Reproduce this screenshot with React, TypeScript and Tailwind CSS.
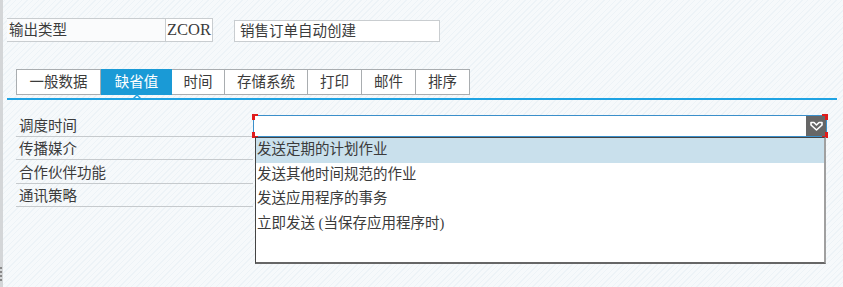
const tabs = ["一般数据", "缺省值", "时间", "存储系统", "打印", "邮件", "排序"];
const tabWidths = ["w-[85px]", "w-[71px]", "w-[53px]", "w-[83px]", "w-[54px]", "w-[54px]", "w-[54px]"];

const rows = ["调度时间", "传播媒介", "合作伙伴功能", "通讯策略"];

const options = [
  "发送定期的计划作业",
  "发送其他时间规范的作业",
  "发送应用程序的事务",
  "立即发送 (当保存应用程序时)",
];

function Corner({ className }: { className: string }) {
  return <span className={`absolute h-[6px] w-[6px] border-solid border-[#e01b1b] ${className}`} />;
}

export default function App() {
  return (
    <div
      className="flex h-[287px] w-[843px] overflow-hidden bg-[repeating-linear-gradient(135deg,#f6f9fb_0px,#f6f9fb_3px,#edf3f7_3px,#edf3f7_4px)] text-[14.5px] leading-none text-[#3b3b3b]"
      style={{ fontFamily: '"Liberation Serif", "Noto Sans CJK SC", serif' }}
    >
      {/* left edge strip */}
      <div className="flex w-[3px] flex-col justify-end bg-[#d4d6d8]">
        <div className="mb-[6px] h-[14px] border-l-[2px] border-dotted border-[#888]" />
      </div>

      <div className="flex flex-1 flex-col pl-[4px]">
        {/* header */}
        <div className="mt-[18px] flex items-start">
          <div className="flex h-[24px] w-[158px] items-center border-y border-[#c9cdd0] bg-[#fafbfc] pl-[2px] pt-[1px]">
            输出类型
          </div>
          <div className="flex h-[24px] w-[48px] items-center justify-center border border-[#c9cdd0] bg-white pt-[1px] text-[16.5px]">
            ZCOR
          </div>
          <div className="ml-[21px] mt-[2px] flex h-[22px] w-[206px] items-center border border-[#c9cdd0] bg-white pl-[5px]">
            销售订单自动创建
          </div>
        </div>

        {/* tabs */}
        <div className="ml-[9px] mt-[27px] flex h-[26px]">
          {tabs.map((t, i) => (
            <div
              key={t}
              className={`flex h-full items-center justify-center ${tabWidths[i]} ${
                i === 1
                  ? "bg-[#1a9ad6] text-white"
                  : "border-y border-r border-[#a9adb0] bg-white"
              } ${i === 0 ? "border-l" : ""}`}
            >
              {t}
            </div>
          ))}
        </div>

        {/* blue rule with notch */}
        <div className="relative mt-[3px] h-[2px] w-[830px] bg-[#1fa3e3]">
          <span className="absolute left-[126px] top-[-4px] h-0 w-0 border-x-[4px] border-b-[4px] border-x-transparent border-b-[#1fa3e3]" />
          <span className="absolute left-[128px] top-[-2px] h-0 w-0 border-x-[2px] border-b-[2px] border-x-transparent border-b-white" />
        </div>

        {/* form */}
        <div className="ml-[9px] mt-[13px] flex">
          <div className="w-[237px]">
            {rows.map((r) => (
              <div key={r} className="flex h-[23.6px] items-center border-b border-[#c6cacd] pl-[3px] pt-[3px]">
                {r}
              </div>
            ))}
          </div>

          <div className="relative mt-[2px] w-[574px]">
            <div className="relative flex h-[22px] border border-[#3b8fca] bg-white">
              <div className="flex-1" />
              <div className="flex w-[20px] items-center justify-center bg-[#666]">
                <svg width="13" height="11" viewBox="0 0 13 11">
                  <path
                    d="M1 1.5 h3 l2.5 2.5 l2.5 -2.5 h3 v2.5 l-5.5 5 l-5.5 -5 z"
                    fill="none"
                    stroke="white"
                    strokeWidth="1.6"
                    strokeLinejoin="round"
                  />
                </svg>
              </div>
              <Corner className="left-[-2px] top-[-2px] border-l-[3px] border-t-[2px] border-r-0 border-b-0" />
              <Corner className="bottom-[-2px] left-[-2px] border-b-[2px] border-l-[3px] border-r-0 border-t-0" />
              <Corner className="right-[-2px] top-[-2px] border-r-[3px] border-t-[2px] border-l-0 border-b-0" />
              <Corner className="bottom-[-2px] right-[-2px] border-b-[2px] border-r-[3px] border-l-0 border-t-0" />
            </div>

            {/* open dropdown list */}
            <div className="absolute left-[2px] top-[22px] h-[127px] w-[571px] border-b-[2px] border-l border-r-[2px] border-t border-b-[#666] border-l-[#444] border-r-[#a0a0a0] border-t-[#444] bg-white">
              {options.map((o, i) => (
                <div
                  key={o}
                  className={`flex items-center pb-[3px] pl-[1px] ${i === 0 ? "h-[25px] bg-[#c9e0ec]" : "h-[24.5px]"}`}
                >
                  {o}
                </div>
              ))}
            </div>
          </div>
        </div>
      </div>
    </div>
  );
}
